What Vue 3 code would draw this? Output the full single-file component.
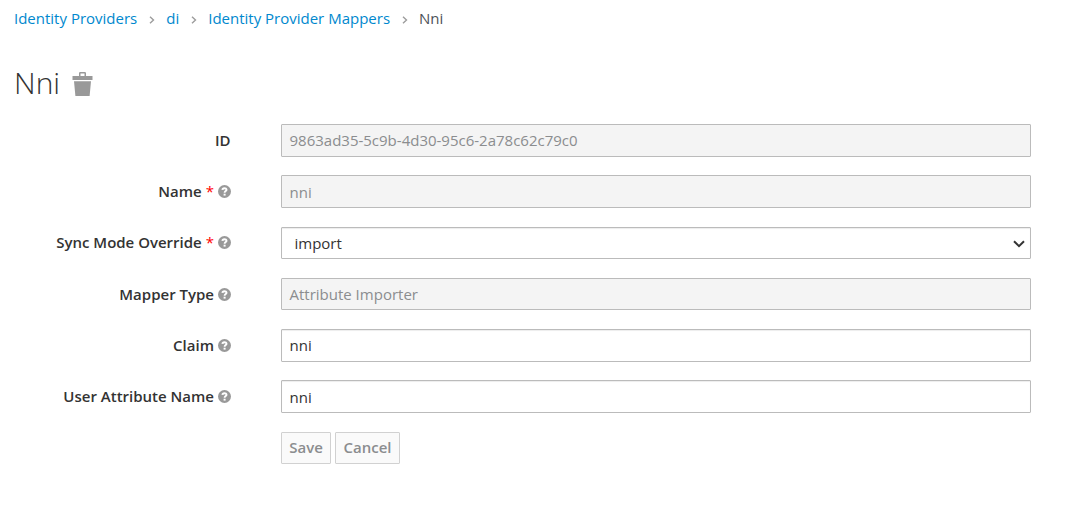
<script setup>
const crumbs = ['Identity Providers', 'di', 'Identity Provider Mappers']
const fields = [
  { label: 'ID', value: '9863ad35-5c9b-4d30-95c6-2a78c62c79c0', disabled: true },
  { label: 'Name', value: 'nni', required: true, help: true, disabled: true, low: true },
  { label: 'Sync Mode Override', value: 'import', required: true, help: true, select: true, low: true },
  { label: 'Mapper Type', value: 'Attribute Importer', help: true, disabled: true },
  { label: 'Claim', value: 'nni', help: true },
  { label: 'User Attribute Name', value: 'nni', help: true, low: true },
]
</script>

<template>
  <main class="page">
    <nav class="crumbs">
      <template v-for="c in crumbs" :key="c">
        <a class="link">{{ c }}</a>
        <svg class="sep" width="6" height="8" viewBox="0 0 6 8"><path d="M1 0.7 4.5 4 1 7.3" /></svg>
      </template>
      <span class="current">Nni</span>
    </nav>

    <h1 class="title">
      <span>Nni</span>
      <svg class="trash" width="21" height="24" viewBox="0 0 21 24">
        <path d="M0.5 4H7V1.2Q7 0 8.2 0H12.8Q14 0 14 1.2V4H20.5V8H0.5ZM8.5 1.5V4H12.5V1.5Z" fill-rule="evenodd" />
        <path d="M2 9.3H19L17.6 24H3.4Z" />
      </svg>
    </h1>

    <form class="form" @submit.prevent>
      <div v-for="f in fields" :key="f.label" class="row">
        <div class="label">
          <span>{{ f.label }}</span>
          <span v-if="f.required" class="star">*</span>
          <svg v-if="f.help" class="help" width="13" height="13" viewBox="0 0 13 13">
            <circle cx="6.5" cy="6.5" r="6.5" />
            <path d="M4.4 4.9C4.5 2.6 8.6 2.7 8.5 4.8 8.4 6 6.6 6.1 6.6 7.7" />
            <rect x="5.6" y="8.7" width="2" height="1.9" />
          </svg>
        </div>
        <div class="control" :class="{ disabled: f.disabled, select: f.select, low: f.low }">
          <span>{{ f.value }}</span>
          <svg v-if="f.select" class="chevron" width="12" height="8" viewBox="0 0 12 8"><path d="M1 1.2 6 6.2 11 1.2" /></svg>
        </div>
      </div>
      <div class="actions">
        <button type="button" class="btn save">Save</button>
        <button type="button" class="btn cancel">Cancel</button>
      </div>
    </form>
  </main>
</template>

<style>
body {
  background: #fff;
}
</style>

<style scoped>
.page {
  box-sizing: border-box;
  height: 515px;
  padding: 8px 44px 0 14px;
  overflow: hidden;
  font-family: "Open Sans", "Noto Sans", sans-serif;
  font-size: 15px;
  line-height: 21px;
  color: #333;
}
.crumbs {
  display: flex;
  align-items: center;
  height: 21px;
  white-space: nowrap;
}
.link {
  color: #0088ce;
}
.sep {
  margin: 2px 11px 0 12px;
  fill: none;
  stroke: #9c9c9c;
  stroke-width: 1.4;
}
.current {
  color: #4d5258;
}
.title {
  display: flex;
  align-items: center;
  height: 33px;
  margin: 37px 0 25px;
  font-size: 30px;
  font-weight: 300;
  line-height: 33px;
}
.trash {
  margin: 2px 0 0 12px;
  fill: #999;
}
.form {
  display: flex;
  flex-direction: column;
}
.row {
  display: flex;
  height: 32.5px;
  margin-bottom: 18.75px;
}
.label {
  display: flex;
  justify-content: flex-end;
  align-items: center;
  width: 216.6px;
  margin-right: 50.4px;
  font-weight: 600;
  white-space: nowrap;
}
.star {
  margin-left: 4px;
  font-weight: 400;
  color: #f00;
}
.help {
  margin-left: 3.6px;
}
.help circle {
  fill: #999;
}
.help path {
  fill: none;
  stroke: #fff;
  stroke-width: 1.9;
}
.help rect {
  fill: #fff;
}
.control {
  display: flex;
  flex: 1;
  align-items: center;
  justify-content: space-between;
  box-sizing: border-box;
  padding: 0 7.5px;
  border: 1px solid #bbb;
  border-radius: 1px;
  box-shadow: inset 0 1px 1px rgba(3, 3, 3, 0.075);
}
.control.disabled {
  background: #f4f4f4;
  box-shadow: none;
  color: #8b8d8f;
}
.control.select {
  padding: 0 5px 0 12.5px;
}
.control.low span {
  padding-top: 1px;
}
.chevron {
  margin-top: 2px;
  fill: none;
  stroke: #333;
  stroke-width: 2;
}
.actions {
  display: flex;
  gap: 4px;
  margin-left: 267px;
}
.btn {
  box-sizing: border-box;
  height: 32px;
  padding: 0;
  border: 1px solid #d1d1d1;
  border-radius: 1px;
  background: #fafafa;
  font: 600 15px/21px "Open Sans", "Noto Sans", sans-serif;
  color: #8b8d8f;
}
.save {
  width: 50px;
}
.cancel {
  width: 65px;
}
</style>
